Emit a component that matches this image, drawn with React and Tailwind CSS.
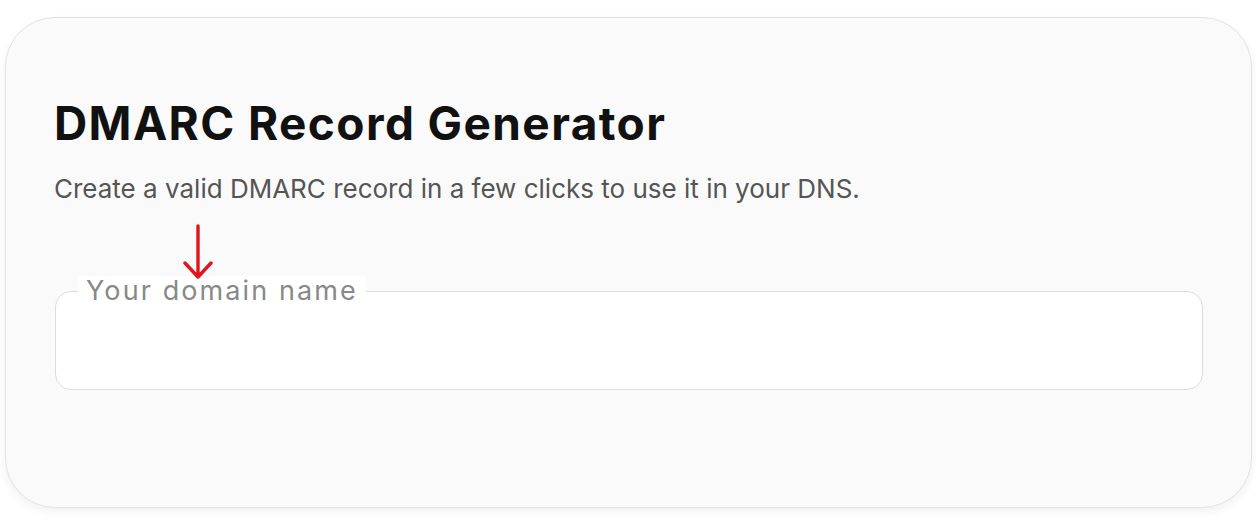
export default function App() {
  return (
    <div className="w-[1256px] h-[528px] bg-white pt-[17px] pl-[5px] font-['Inter',sans-serif]">
      <div className="relative w-[1247px] h-[491px] rounded-[50px] border border-[#e3e3e3] bg-[#fafafa] shadow-[0_4px_10px_rgba(0,0,0,0.06)] px-[48px] pt-[77px]">
        <h1 className="text-[46px] leading-[56px] font-bold text-[#111] tracking-[1.4px]">DMARC Record Generator</h1>
        <p className="mt-[23px] text-[26px] leading-[30px] text-[#555]">
          Create a valid DMARC record in a few clicks to use it in your DNS.
        </p>

        {/* annotation arrow */}
        <svg className="absolute left-[177px] top-[206px]" width="32" height="56" viewBox="0 0 32 56" fill="none">
          <path d="M15 2v51M2 39l13 14 13-14" stroke="#e0161e" strokeWidth="3.4" strokeLinecap="round" strokeLinejoin="round" />
        </svg>

        <fieldset className="mt-[72px] ml-[1px] h-[114px] rounded-[16px] border border-[#dcdcdc] bg-white px-[22px]">
          <legend className="rounded-[4px] bg-white px-[8px] text-[27px] leading-[30px] tracking-[2.1px] text-[#888]">Your domain name</legend>
        </fieldset>
      </div>
    </div>
  );
}
